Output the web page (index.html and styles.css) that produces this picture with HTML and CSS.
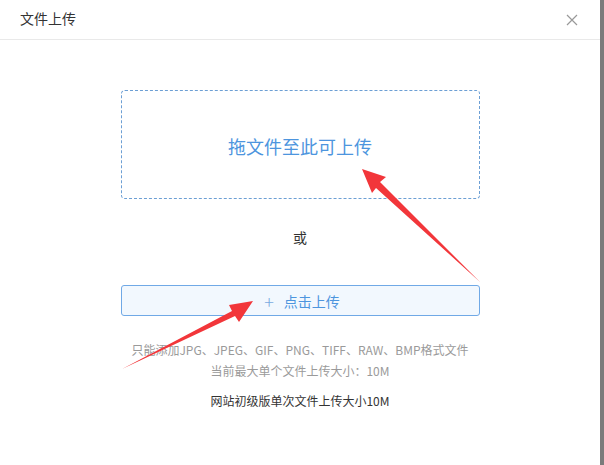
FILE: index.html
```html
<!DOCTYPE html>
<html lang="zh">
<head>
<meta charset="utf-8">
<link rel="stylesheet" href="styles.css">
</head>
<body>
<div class="page">
  <div class="dialog">
    <div class="header">
      <span class="title">文件上传</span>
      <svg class="close" width="12" height="12" viewBox="0 0 12 12"><path d="M1 1L11 11M11 1L1 11" stroke="#999" stroke-width="1.2" fill="none"/></svg>
    </div>
    <div class="content">
      <div class="dropzone">拖文件至此可上传</div>
      <div class="or">或</div>
      <div class="upload-btn"><span class="plus">+</span><span>点击上传</span></div>
      <div class="hints">
        <div>只能添加JPG、JPEG、GIF、PNG、TIFF、RAW、BMP格式文件</div>
        <div>当前最大单个文件上传大小：10M</div>
      </div>
      <div class="limit">网站初级版单次文件上传大小10M</div>
    </div>
    <svg class="arrows" width="600" height="465" viewBox="0 0 600 465">
      <polygon fill="#f2363a" points="362,169 386,177 380,182 480,282 376,188 372,193"/>
      <polygon fill="#f2363a" points="253,301 239,322 235,316 122,369 232,311 229,305"/>
    </svg>
  </div>
  <div class="scrollbar"></div>
</div>
</body>
</html>
```
FILE: styles.css
```css
html, body {
  margin: 0;
  padding: 0;
  background: #fff;
  font-family: "Noto Sans CJK SC", "Noto Sans", sans-serif;
}
.page {
  display: flex;
  width: 604px;
  height: 465px;
  overflow: hidden;
}
.dialog {
  position: relative;
  width: 600px;
  height: 465px;
}
.scrollbar {
  width: 4px;
  background: #7b7b7b;
}
.header {
  height: 40px;
  border-bottom: 1px solid #e9e9e9;
  display: flex;
  align-items: center;
  justify-content: space-between;
  padding: 0 22px 3px 20px;
  box-sizing: border-box;
}
.title {
  font-size: 14px;
  color: #333;
  line-height: 20px;
}
.close {
  margin-top: 3px;
}
.content {
  display: flex;
  flex-direction: column;
  align-items: center;
  padding-top: 50px;
}
.dropzone {
  width: 359px;
  height: 109px;
  box-sizing: border-box;
  border: 1px dashed #6c9fd4;
  border-radius: 4px;
  display: flex;
  align-items: center;
  justify-content: center;
  font-size: 18px;
  color: #4d95de;
  padding-top: 3px;
}
.or {
  margin-top: 28px;
  font-size: 14px;
  line-height: 20px;
  color: #333;
}
.upload-btn {
  margin-top: 38px;
  width: 359px;
  height: 31px;
  box-sizing: border-box;
  border: 1px solid #70a9e6;
  border-radius: 3px;
  background: #f2f8fe;
  display: flex;
  align-items: center;
  justify-content: center;
  gap: 10px;
  font-size: 14px;
  color: #4d95de;
  padding-left: 4px;
}
.plus {
  font-size: 18px;
  font-weight: 300;
  line-height: 20px;
  color: #7aaae0;
}
.hints {
  margin-top: 23px;
  font-size: 12px;
  line-height: 21px;
  color: #9a9a9a;
  text-align: center;
}
.limit {
  margin-top: 9px;
  font-size: 12px;
  line-height: 21px;
  color: #333;
}
.arrows {
  position: absolute;
  left: 0;
  top: 0;
  pointer-events: none;
}
```
